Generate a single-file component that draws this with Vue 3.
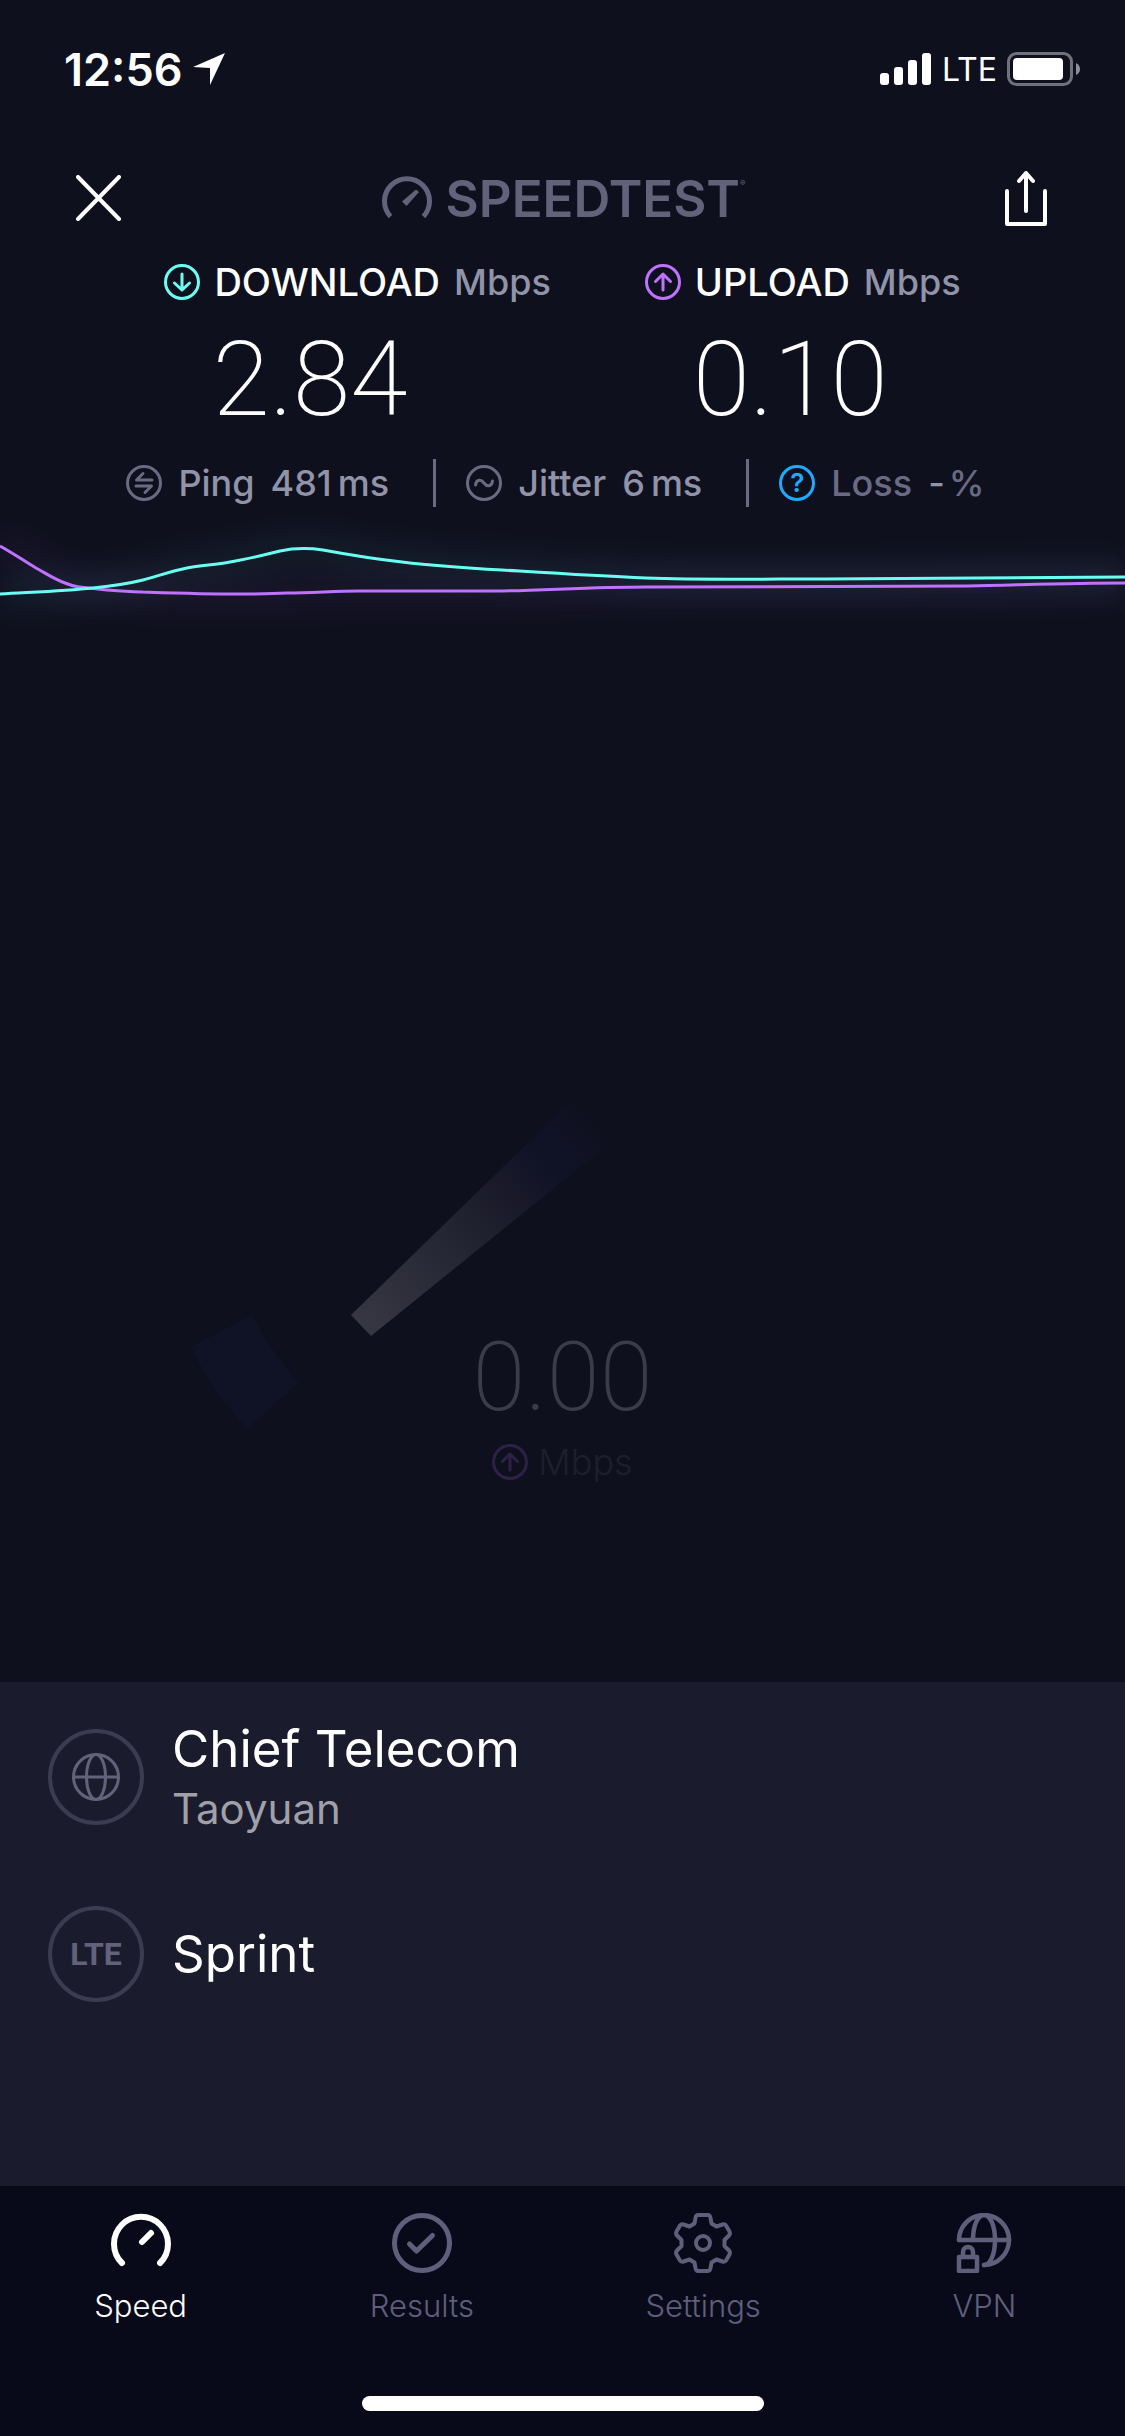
<template>
  <div class="app">
    <div class="status-bar">
      <div class="status-left">
        <span class="time">12:56</span>
        <svg class="location" viewBox="0 0 32 32" aria-hidden="true">
          <path d="M32 0 17 32V15L0 14Z" />
        </svg>
      </div>
      <div class="status-right">
        <svg class="signal" viewBox="0 0 52 32" aria-hidden="true">
          <rect x="0" y="20" width="9" height="12" rx="3" />
          <rect x="14" y="14" width="9" height="18" rx="3" />
          <rect x="28" y="7" width="9" height="25" rx="3" />
          <rect x="42" y="0" width="9" height="32" rx="3" />
        </svg>
        <span class="carrier">LTE</span>
        <svg class="battery" viewBox="0 0 74 34" aria-hidden="true">
          <rect class="battery-case" x="1.5" y="1.5" width="63" height="31" rx="8" />
          <rect x="6" y="6" width="50" height="22" rx="4" />
          <path class="battery-tip" d="M69 11q4 2 4 6t-4 6z" />
        </svg>
      </div>
    </div>

    <header class="header">
      <button class="icon-button" type="button" aria-label="Close">
        <svg class="close" viewBox="0 0 46 46"><path d="M2 2 43 44M43 2 2 44" /></svg>
      </button>
      <h1 class="logo">
        <svg class="logo-mark" viewBox="0 0 50 44" aria-hidden="true">
          <path class="logo-arc" d="M8.5 40.5A22.5 22.5 0 1 1 41.5 40.5" />
          <path class="logo-needle" d="M20 25.5 24.5 30 37 16 34 13.5Z" />
        </svg>
        <span>SPEEDTEST</span><sup>®</sup>
      </h1>
      <button class="icon-button" type="button" aria-label="Share">
        <svg class="share" viewBox="0 0 42 56">
          <path d="M2 21V54H40V21M21 41V3M14 11 21 3 28 11" />
        </svg>
      </button>
    </header>

    <section class="results">
      <div v-for="result in results" :key="result.label" class="result">
        <h2 class="result-label">
          <svg :class="['badge', result.kind]" viewBox="0 0 36 36" aria-hidden="true">
            <circle cx="18" cy="18" r="16.5" />
            <path :d="arrows[result.kind]" />
          </svg>
          <span>{{ result.label }}</span>
          <span class="unit">Mbps</span>
        </h2>
        <p class="result-value">{{ result.value }}</p>
      </div>
    </section>

    <ul class="metrics">
      <li class="metric">
        <svg class="badge" viewBox="0 0 36 36" aria-hidden="true">
          <circle cx="18" cy="18" r="16.5" />
          <path d="M26 15H10.5L17 8.5M10 21H25.5L19 27.5" />
        </svg>
        <span>Ping</span>
        <span class="metric-value">481<span class="metric-unit">ms</span></span>
      </li>
      <li class="metric">
        <svg class="badge" viewBox="0 0 36 36" aria-hidden="true">
          <circle cx="18" cy="18" r="16.5" />
          <path d="M9.5 20C10.5 14 15 14 18 18S25.5 22 26.5 16" />
        </svg>
        <span>Jitter</span>
        <span class="metric-value">6<span class="metric-unit">ms</span></span>
      </li>
      <li class="metric loss">
        <button class="help" type="button" aria-label="About packet loss">?</button>
        <span>Loss</span>
        <span class="metric-value"><span class="dash">-</span>%</span>
      </li>
    </ul>

    <svg class="graph" viewBox="0 0 1125 128" preserveAspectRatio="none" aria-hidden="true">
      <defs>
        <filter id="glow" x="-10%" y="-100%" width="120%" height="300%">
          <feGaussianBlur stdDeviation="14" />
        </filter>
      </defs>
      <path class="glow upload" :d="uploadLine" />
      <path class="glow download" :d="downloadLine" />
      <path class="line upload" :d="uploadLine" />
      <path class="line download" :d="downloadLine" />
    </svg>

    <main class="stage">
      <div class="gauge">
        <svg class="gauge-dial" viewBox="0 0 750 400" aria-hidden="true">
          <defs>
            <linearGradient id="needle" gradientUnits="userSpaceOnUse" x1="174" y1="226" x2="404" y2="21">
              <stop offset="0" stop-color="#373743" />
              <stop offset="0.35" stop-color="#272835" />
              <stop offset="0.65" stop-color="#191929" />
              <stop offset="0.8" stop-color="#101226" />
              <stop offset="0.9" stop-color="#101224" />
              <stop offset="1" stop-color="#0f101e" />
            </linearGradient>
          </defs>
          <path d="M163 215 183 236 428 38 384 0Z" fill="url(#needle)" />
          <path d="M2 247 64 215Q84 252 111 283L59 329Q26 293 2 247Z" fill="#101226" />
        </svg>
        <div class="readout">
          <p class="readout-value">0.00</p>
          <p class="readout-unit">
            <svg class="badge upload" viewBox="0 0 36 36" aria-hidden="true">
              <circle cx="18" cy="18" r="16.5" />
              <path :d="arrows.upload" />
            </svg>
            <span>Mbps</span>
          </p>
        </div>
      </div>
    </main>

    <section class="panel">
      <div class="provider">
        <span class="provider-icon">
          <svg class="globe" viewBox="0 0 48 48" aria-hidden="true">
            <circle cx="24" cy="24" r="22.5" />
            <ellipse cx="24" cy="24" rx="9.5" ry="22.5" />
            <path d="M2 24H46" />
          </svg>
        </span>
        <div>
          <p class="provider-name">Chief Telecom</p>
          <p class="provider-place">Taoyuan</p>
        </div>
      </div>
      <div class="provider">
        <span class="provider-icon lte">LTE</span>
        <p class="provider-name">Sprint</p>
      </div>
    </section>

    <footer class="footer">
      <nav class="tabs">
        <a
          v-for="tab in tabs"
          :key="tab.name"
          href="#"
          :class="['tab', { active: tab.name === current }]"
          @click.prevent="current = tab.name"
        >
          <svg class="tab-icon" viewBox="0 0 60 60" :stroke-width="tab.stroke" aria-hidden="true">
            <path v-for="d in tab.paths" :key="d" :d="d" />
          </svg>
          <span>{{ tab.name }}</span>
        </a>
      </nav>
      <div class="home-indicator"></div>
    </footer>
  </div>
</template>

<script setup>
import { ref } from 'vue';

const current = ref('Speed');

const results = [
  { kind: 'download', label: 'DOWNLOAD', value: '2.84' },
  { kind: 'upload', label: 'UPLOAD', value: '0.10' }
];

const arrows = {
  download: 'M18 10V26M10.5 19 18 26 25.5 19',
  upload: 'M18 26V10M10.5 17.5 18 10 25.5 17.5'
};

const downloadLine =
  'M0 82C35 80 65 79 93 76C112 74 127 72 143 68C158 64 172 59 187 56C201 53 216 53 230 50C248 47 264 43 280 39C294 36 309 36 323 38C350 43 375 47 402 50C435 54 465 56 502 58C550 61 595 64 646 66C700 68 765 67 825 67C930 67 1030 66 1125 65';
const uploadLine =
  'M0 34C13 41 24 49 36 56C47 62 54 67 65 71C75 75 83 76 90 76C108 79 125 79 143 80C175 81 205 82 237 82C256 82 270 82 287 81C312 81 335 79 359 79C405 79 455 79 502 79C550 78 595 75 646 75C755 74 860 75 968 74C1020 73 1070 71 1125 71';

const tabs = [
  {
    name: 'Speed',
    stroke: 6,
    paths: ['M11 50A27 27 0 1 1 49 50', 'M31 29 40 20']
  },
  {
    name: 'Results',
    stroke: 5,
    paths: ['M30 2.5A27.5 27.5 0 1 1 30 57.5A27.5 27.5 0 1 1 30 2.5Z', 'M17.5 31 24.5 38 40.5 22.5']
  },
  {
    name: 'Settings',
    stroke: 4,
    paths: [
      'M25 2H35Q37 2 37.5 5L38.5 10.5 43.5 13.5 49.5 11.5Q52 11 53 12.5L56.5 18.5Q57.5 21 56 22.5L51.5 27V33L56 37.5Q57.5 39 56.5 41.5L53 47.5Q52 49 49.5 48.5L43.5 46.5 38.5 49.5 37.5 55Q37 58 35 58H25Q23 58 22.5 55L21.5 49.5 16.5 46.5 10.5 48.5Q8 49 7 47.5L3.5 41.5Q2.5 39 4 37.5L8.5 33V27L4 22.5Q2.5 21 3.5 18.5L7 12.5Q8 11 10.5 11.5L16.5 13.5 21.5 10.5 22.5 5Q23 2 25 2Z',
      'M30 23A7 7 0 1 1 30 37A7 7 0 1 1 30 23Z'
    ]
  },
  {
    name: 'VPN',
    stroke: 4.5,
    paths: [
      'M5 27A25 25 0 1 1 30 52',
      'M5 27H55',
      'M19 27C19 12 24 2 30 2S41 12 41 27 36 52 30 52',
      'M5 44H23V58H5Z',
      'M9 43V39A5 5 0 0 1 19 39V43'
    ]
  }
];
</script>

<style>
body {
  margin: 0;
  background: #0f101e;
}
</style>

<style scoped>
.app {
  display: flex;
  flex-direction: column;
  min-height: 100vh;
  background: #0f101e;
  color: #fff;
  font-family: Inter, "Liberation Sans", sans-serif;
}

h1,
h2,
p,
ul {
  margin: 0;
  padding: 0;
  font-weight: inherit;
}

svg {
  display: block;
  flex: none;
}

button {
  padding: 0;
  border: 0;
  background: none;
  font: inherit;
  color: inherit;
}

.status-bar {
  display: flex;
  justify-content: space-between;
  align-items: center;
  height: 138px;
  padding: 0 44px 0 64px;
}

.status-left,
.status-right {
  display: flex;
  align-items: center;
  gap: 10px;
}

.status-bar svg {
  fill: #fff;
}

.time {
  font-size: 45px;
  font-weight: 600;
}

.location {
  width: 32px;
  height: 32px;
}

.signal {
  width: 52px;
  height: 32px;
}

.carrier {
  font-size: 32px;
}

.battery {
  width: 74px;
  height: 34px;
}

.status-bar .battery-case {
  fill: none;
  stroke: #71717a;
  stroke-width: 3;
}

.status-bar .battery-tip {
  fill: #8f8f95;
}

.header {
  display: flex;
  justify-content: space-between;
  align-items: center;
  height: 120px;
  padding: 0 78px 0 76px;
}

.icon-button svg {
  fill: none;
  stroke: #fff;
  stroke-width: 4;
  stroke-linecap: round;
  stroke-linejoin: round;
}

.close {
  width: 46px;
  height: 46px;
}

.share {
  width: 42px;
  height: 56px;
}

.logo {
  display: flex;
  align-items: center;
  font-size: 51px;
  font-weight: 600;
  color: #62627a;
}

.logo sup {
  align-self: flex-start;
  margin-top: 10px;
  font-size: 8px;
}

.logo-mark {
  width: 50px;
  height: 44px;
  margin-right: 14px;
}

.logo-arc {
  fill: none;
  stroke: #62627a;
  stroke-width: 5;
}

.logo-needle {
  fill: #62627a;
}

.results {
  display: flex;
  justify-content: center;
  gap: 94px;
}

.result-label {
  display: flex;
  align-items: center;
  gap: 14px;
  height: 48px;
  font-size: 38px;
  font-weight: 500;
}

.unit {
  font-size: 36px;
  color: #9193a8;
}

.result-value {
  padding-left: 48px;
  font-family: Roboto, sans-serif;
  font-size: 104px;
  font-weight: 200;
  line-height: 148px;
}

.badge {
  width: 36px;
  height: 36px;
  fill: none;
  stroke: #6a6a83;
  stroke-width: 3;
  stroke-linecap: round;
  stroke-linejoin: round;
}

.download {
  stroke: #6afff3;
}

.upload {
  stroke: #bf71ff;
}

.metrics {
  display: flex;
  justify-content: center;
  align-items: center;
  height: 58px;
  list-style: none;
  font-size: 36px;
  font-weight: 500;
  color: #9193a8;
}

.metric {
  display: flex;
  align-items: center;
  gap: 16px;
  height: 48px;
  padding: 0 44px 0 30px;
}

.metric + .metric {
  border-left: 3px solid #6a6a83;
}

.metric-unit {
  margin-left: 6px;
}

.loss {
  color: #6a6a83;
}

.dash {
  margin-right: 4px;
  color: #9193a8;
}

.help {
  width: 36px;
  height: 36px;
  border: 3px solid #1eaaff;
  border-radius: 50%;
  font-size: 26px;
  font-weight: 600;
  line-height: 30px;
  color: #1eaaff;
}

.graph {
  width: 100%;
  height: 128px;
  fill: none;
}

.line {
  stroke-width: 3;
}

.glow {
  stroke-width: 34;
  opacity: 0.05;
  filter: url(#glow);
}

.stage {
  display: flex;
  flex: 1;
  justify-content: center;
  align-items: flex-end;
  padding-bottom: 182px;
}

.gauge {
  display: grid;
  width: 750px;
}

.gauge > * {
  grid-area: 1 / 1;
}

.gauge-dial {
  width: 100%;
}

.readout {
  align-self: end;
  padding-bottom: 14px;
  text-align: center;
}

.readout-value {
  font-family: Roboto, sans-serif;
  font-size: 96px;
  font-weight: 200;
  line-height: 122px;
  color: #3b3c47;
}

.readout-unit {
  display: flex;
  justify-content: center;
  align-items: center;
  gap: 10px;
  height: 48px;
  font-size: 36px;
  font-weight: 300;
  color: #1e1f2d;
}

.readout-unit .upload {
  stroke: #2e2047;
}

.panel {
  display: flex;
  flex-direction: column;
  gap: 57px;
  padding: 35px 48px 172px;
  background: #1b1b2e;
}

.provider {
  display: flex;
  align-items: center;
  gap: 28px;
  min-height: 120px;
}

.provider-icon {
  display: flex;
  flex: none;
  justify-content: center;
  align-items: center;
  box-sizing: border-box;
  width: 96px;
  height: 96px;
  border: 4px solid #3c3c50;
  border-radius: 50%;
}

.globe {
  width: 48px;
  height: 48px;
  fill: none;
  stroke: #62627a;
  stroke-width: 3;
}

.lte {
  font-family: Roboto, sans-serif;
  font-size: 32px;
  font-weight: 700;
  color: #62627a;
}

.provider-name {
  font-size: 51px;
  font-weight: 400;
  line-height: 64px;
}

.provider-place {
  font-size: 42px;
  font-weight: 400;
  line-height: 56px;
  color: #a0a0a9;
}

.footer {
  display: flex;
  flex-direction: column;
  justify-content: space-between;
  align-items: center;
  height: 250px;
  background: #090a19;
}

.tabs {
  display: flex;
  width: 100%;
  padding-top: 27px;
}

.tab {
  display: flex;
  flex: 1;
  flex-direction: column;
  align-items: center;
  gap: 13px;
  font-size: 31px;
  font-weight: 300;
  line-height: 40px;
  color: #5f5f7c;
  text-decoration: none;
}

.tab.active {
  color: #fff;
}

.tab-icon {
  width: 60px;
  height: 60px;
  fill: none;
  stroke: currentColor;
  stroke-linecap: round;
  stroke-linejoin: round;
}

.home-indicator {
  width: 402px;
  height: 15px;
  margin-bottom: 25px;
  border-radius: 8px;
  background: #fff;
}
</style>
